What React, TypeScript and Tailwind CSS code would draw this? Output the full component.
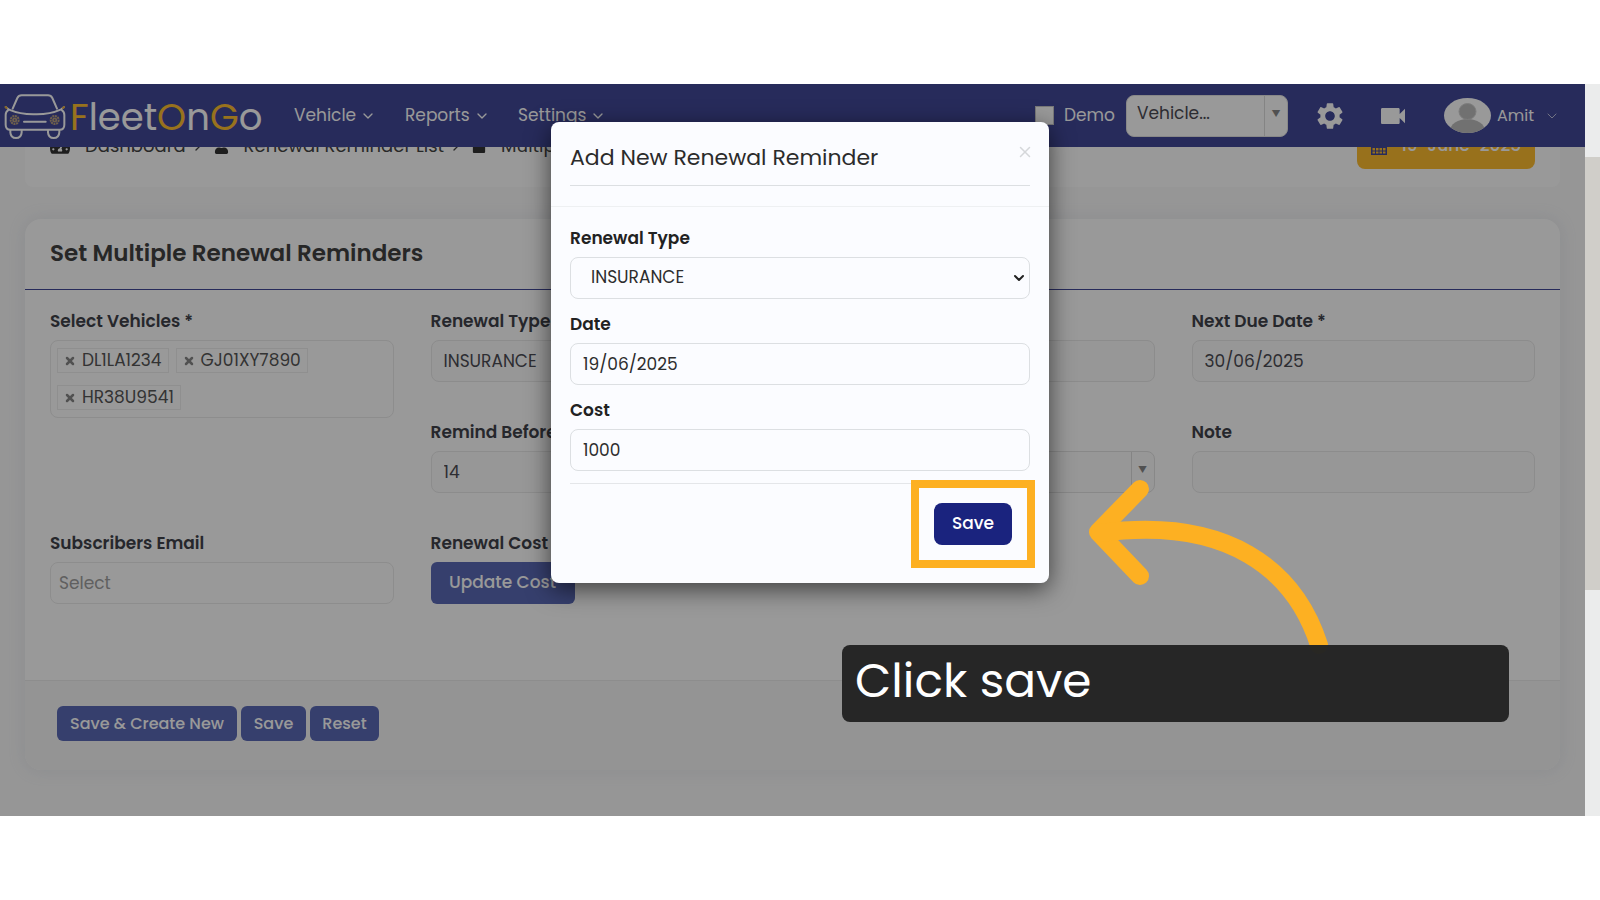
import { useState } from "react";
import type { ReactNode } from "react";
import { ChevronDown, ChevronRight, X } from "lucide-react";
import { FaLock, FaTachometerAlt, FaUser } from "react-icons/fa";
import { MdSettings, MdVideocam } from "react-icons/md";

const inputClass = "w-full h-[42px] rounded-lg border border-[#e9e9ea] bg-[#fcfcfc] px-3 text-[17px] text-[#4c4c54]";
const modalInputClass = "w-full h-[42px] rounded-lg border border-[#dcdfe2] bg-transparent px-3 text-[17px] text-[#2d2d2d]";
const buttonClass = "rounded-md bg-[#5a69b6] font-medium text-white";

function CarLogo() {
    return (
        <svg className="h-[47px] w-[62px] shrink-0" viewBox="12 26 186 141" fill="none" stroke="#fff" strokeWidth="6" strokeLinecap="round" strokeLinejoin="round" aria-hidden="true">
            <path d="M38 73 52 41Q56 33 65 33H144Q153 33 157 41L171 73" />
            <path d="M17 68 27 76Q62 91 105 90Q148 91 182 76L192 68" />
            <path d="M24 78Q17 82 17 92V121Q17 136 31 136H179Q193 136 193 121V92Q193 82 186 78" />
            <path d="M31 138V144Q32 161 48 161Q64 161 65 144V138M144 138V144Q145 161 161 161Q177 161 178 144V138" />
            <path d="M72 112H137" />
            <circle cx="44" cy="107" r="12" stroke="#b8a080" strokeWidth="6" strokeDasharray="6 2" strokeLinecap="butt" />
            <circle cx="44" cy="107" r="5" stroke="#b8a080" strokeWidth="5" />
            <circle cx="164" cy="107" r="12" stroke="#b8a080" strokeWidth="6" strokeDasharray="6 2" strokeLinecap="butt" />
            <circle cx="164" cy="107" r="5" stroke="#b8a080" strokeWidth="5" />
            <path d="M17 68 20 71M192 68 189 71" stroke="#e0a83c" />
        </svg>
    );
}

function Avatar() {
    return (
        <svg className="h-[35px] w-[47px]" viewBox="0 0 47 35" aria-hidden="true">
            <defs>
                <clipPath id="avatar-clip"><ellipse cx="23.5" cy="17.5" rx="23.5" ry="17.5" /></clipPath>
            </defs>
            <g clipPath="url(#avatar-clip)">
                <rect width="47" height="35" fill="#fff" />
                <ellipse cx="23.5" cy="33" rx="17.5" ry="12" fill="#bdbdbd" />
                <ellipse cx="23.5" cy="13.5" rx="8.5" ry="8" fill="#bdbdbd" stroke="#d0d0d0" />
            </g>
        </svg>
    );
}

function CalendarIcon() {
    return (
        <svg className="h-[17px] w-4" viewBox="0 0 16 17" fill="none" stroke="#414898" aria-hidden="true">
            <rect x="0.75" y="2.75" width="14.5" height="13.5" strokeWidth="1.5" />
            <path d="M1 6H15M1 9.5H15M1 13H15M4.5 6V16M8 6V16M11.5 6V16" />
            <path d="M4.5 0.5V4M11.5 0.5V4" strokeWidth="2" />
        </svg>
    );
}

function NavLink({ text, width }: { text: string; width: string }) {
    return (
        <a href="#" className={`${width} flex items-center gap-1 text-[17px] text-white`}>
            {text}
            <ChevronDown size={16} strokeWidth={2} />
        </a>
    );
}

function NavBar() {
    return (
        <header className="relative flex h-[63px] items-center bg-[#414898] pl-1 pr-[25px]">
            <a href="#" className="flex w-[290px] shrink-0 items-center gap-1 pt-0.5 text-[37px] leading-none text-white">
                <CarLogo />
                <span className="pt-0.5"><span className="text-[#fdbf31]">F</span>leet<span className="text-[#fdbf31]">O</span>n<span className="text-[#fdbf31]">G</span>o</span>
            </a>
            <nav className="flex items-center">
                <NavLink text="Vehicle" width="w-[111px]" />
                <NavLink text="Reports" width="w-[113px]" />
                <NavLink text="Settings" width="w-[100px]" />
            </nav>
            <div className="ml-auto flex items-center">
                <input id="demo" type="checkbox" className="size-[19px] appearance-none border border-[#c8c8c8] bg-white" />
                <label htmlFor="demo" className="w-[72px] pl-2.5 text-[17px] text-white">Demo</label>
                <SelectBox label="Vehicle" text="Vehicle..." className="w-[162px] bg-white" />
                <button type="button" aria-label="Settings" className="ml-[26px] text-white"><MdSettings size={32} /></button>
                <button type="button" aria-label="Video" className="ml-[31px] text-white"><MdVideocam size={32} /></button>
                <button type="button" className="ml-[35px] flex items-center text-base text-white">
                    <Avatar />
                    <span className="w-[53px] pl-1.5 text-left">Amit</span>
                    <ChevronDown size={16} strokeWidth={1} />
                </button>
            </div>
        </header>
    );
}

function SelectBox({ label, text, className }: { label: string; text: string; className: string }) {
    return (
        <div className={`${className} relative h-[42px] overflow-hidden rounded-lg border border-[#e3e3e3]`}>
            <select aria-label={label} className="h-full w-full appearance-none px-2.5 pb-1 text-[17px] text-[#4c4c54]">
                <option>{text}</option>
            </select>
            <span className="pointer-events-none absolute inset-y-0 right-0 flex w-[23px] items-start justify-center border-l border-[#dcdcdc] pt-3 text-[9px] text-[#888]">▼</span>
        </div>
    );
}

function Crumb({ icon, text, last }: { icon: ReactNode; text: string; last?: boolean }) {
    return (
        <li className="flex items-center whitespace-nowrap">
            <span className="mr-[15px] text-[#333]">{icon}</span>
            <a href="#">{text}</a>
            {!last && <ChevronRight size={16} className="ml-1 mr-2" />}
        </li>
    );
}

function Tag({ text }: { text: string }) {
    return (
        <li className="flex h-[25px] items-center gap-1.5 border border-[#eeeeee] px-1.5 text-[17px] text-[#555]">
            <button type="button" aria-label={`Remove ${text}`}><X size={12} strokeWidth={5} className="text-[#888]" /></button>
            {text}
        </li>
    );
}

function Field({ label, id, children, className = "" }: { label: string; id: string; children: ReactNode; className?: string }) {
    return (
        <div className={className}>
            <label htmlFor={id} className="mb-2 block h-6 whitespace-nowrap text-[17px] font-semibold leading-[26px]">{label}</label>
            {children}
        </div>
    );
}

function ReminderForm() {
    return (
        <form className="mx-[25px] mt-8 overflow-hidden rounded-2xl bg-white shadow-[0_0_16px_2px_rgba(150,165,190,0.14)]">
            <h1 className="h-[71px] border-b border-[#414898] px-[25px] text-[23px] font-semibold leading-[69px] text-[#424242]">Set Multiple Renewal Reminders</h1>
            <div className="grid grid-cols-4 gap-[37px] px-[25px] pb-[76px] pt-[18px] text-[#40424a]">
                <Field label="Select Vehicles *" id="vehicles" className="row-span-2">
                    <ul id="vehicles" className="flex h-[78px] flex-wrap content-start gap-x-[7px] gap-y-3 rounded-lg border border-[#ebebeb] px-1.5 py-[7px]">
                        <Tag text="DL1LA1234" />
                        <Tag text="GJ01XY7890" />
                        <Tag text="HR38U9541" />
                    </ul>
                </Field>
                <Field label="Renewal Type *" id="type">
                    <input id="type" className={inputClass} defaultValue="INSURANCE" />
                </Field>
                <div className="self-end">
                    <input aria-label="Last Due Date" className={inputClass} />
                </div>
                <Field label="Next Due Date *" id="next-due">
                    <input id="next-due" className={inputClass} defaultValue="30/06/2025" />
                </Field>
                <Field label="Remind Before" id="remind">
                    <input id="remind" className={inputClass} defaultValue="14" />
                </Field>
                <div className="self-end">
                    <SelectBox label="Period" text="" className="w-full bg-[#fcfcfc]" />
                </div>
                <Field label="Note" id="note">
                    <input id="note" className={inputClass} />
                </Field>
                <Field label="Subscribers Email" id="email">
                    <input id="email" className="h-[42px] w-full rounded-lg border border-[#ebebeb] px-2 text-[17px] placeholder:text-[#a0a0a0]" placeholder="Select" />
                </Field>
                <Field label="Renewal Cost" id="cost-button">
                    <button id="cost-button" type="button" className={`${buttonClass} h-[42px] w-36 text-[17px]`}>Update Cost</button>
                </Field>
            </div>
            <div className="flex gap-1 border-t border-[#ececec] bg-[#f7f7f7] pb-[29px] pl-8 pt-[25px]">
                <button type="button" className={`${buttonClass} h-[35px] w-[180px] text-base`}>Save &amp; Create New</button>
                <button type="button" className={`${buttonClass} h-[35px] w-[65px] text-base`}>Save</button>
                <button type="button" className={`${buttonClass} h-[35px] w-[69px] text-base`}>Reset</button>
            </div>
        </form>
    );
}

function Modal({ onClose }: { onClose: () => void }) {
    return (
        <div role="dialog" aria-labelledby="modal-title" className="relative w-[498px] rounded-lg bg-[#fbfcff] text-[#222] shadow-[0_6px_24px_rgba(0,0,0,0.6)]">
            <div className="border-b border-[#eef0f2] px-[19px] pb-5">
                <div className="flex h-16 items-center justify-between border-b border-[#dcdfe2] pt-2">
                    <h2 id="modal-title" className="text-[22px] text-[#2b2b2b]">Add New Renewal Reminder</h2>
                    <button type="button" aria-label="Close" onClick={onClose} className="-mr-1 mb-3 text-[#d5d7da]"><X size={18} /></button>
                </div>
            </div>
            <form className="px-[19px] pb-[38px] pt-[18px]">
                <div className="flex flex-col gap-3">
                    <Field label="Renewal Type" id="modal-type">
                        <div className="relative">
                            <select id="modal-type" className={`${modalInputClass} appearance-none pl-5`}>
                                <option>INSURANCE</option>
                            </select>
                            <ChevronDown size={16} strokeWidth={3} className="pointer-events-none absolute right-[3px] top-[13px]" />
                        </div>
                    </Field>
                    <Field label="Date" id="modal-date">
                        <input id="modal-date" className={modalInputClass} defaultValue="19/06/2025" />
                    </Field>
                    <Field label="Cost" id="modal-cost">
                        <input id="modal-cost" className={modalInputClass} defaultValue="1000" />
                    </Field>
                </div>
                <div className="mt-3 flex justify-end border-t border-[#e4e6e9] pr-[18px] pt-[19px]">
                    <div className="relative">
                        <button type="button" className="h-[42px] w-[78px] rounded-lg bg-[#1a237e] text-[17px] font-medium text-white">Save</button>
                        <span className="pointer-events-none absolute -inset-x-[23px] -inset-y-[23px] border-8 border-[#fdb022]" />
                    </div>
                </div>
            </form>
        </div>
    );
}

export default function App() {
    const [showModal, setShowModal] = useState(true);

    return (
        <div className="flex min-h-screen flex-col justify-center bg-white font-[Poppins,Inter,sans-serif]">
            <div className="relative flex">
                <div className="relative min-w-0 flex-1 overflow-hidden bg-[#fafafa] pb-[46px]">
                    <NavBar />
                    <main className="-mb-10 overflow-hidden pb-10">
                        <div className="mx-[25px] -mt-8 flex h-[72px] items-start justify-between rounded-lg bg-white px-[25px] pt-2">
                            <ol className="flex h-[46px] items-center text-lg text-[#444]">
                                <Crumb icon={<FaTachometerAlt size={20} />} text="Dashboard" />
                                <Crumb icon={<FaUser size={15} />} text="Renewal Reminder List" />
                                <Crumb icon={<FaLock size={14} />} text="Multiple Renewal Reminders" last />
                            </ol>
                            <button type="button" className="flex h-[46px] w-[178px] items-center justify-center gap-3.5 rounded-lg bg-[#fdbc30] text-[17px] font-medium text-white">
                                <CalendarIcon />
                                19-June-2025
                            </button>
                        </div>
                        <ReminderForm />
                    </main>
                    {showModal && <div className="absolute inset-0 bg-black/40" />}
                </div>
                <div className="flex w-[15px] shrink-0 flex-col bg-[#ebecec]">
                    <div className="mt-[73px] h-[433px] bg-[#d0cec9]" />
                </div>
                {showModal && (
                    <div className="absolute inset-0 flex items-start justify-center pt-[38px]">
                        <Modal onClose={() => setShowModal(false)} />
                    </div>
                )}
                <svg className="pointer-events-none absolute right-[264px] top-[392px] h-[190px] w-[250px]" viewBox="1086 476 250 190" fill="none" stroke="#fdb022" strokeWidth="18" strokeLinecap="round" strokeLinejoin="round" aria-hidden="true">
                    <path d="M1140 489 1098 532 1140 576" />
                    <path d="M1100 533C1228 516 1295 570 1319 645" />
                </svg>
                <div className="absolute right-[91px] top-[561px] h-[77px] w-[667px] rounded-lg bg-[#242424]/98 pl-[13px] text-[47px] leading-[72px] text-white">Click save</div>
            </div>
        </div>
    );
}
